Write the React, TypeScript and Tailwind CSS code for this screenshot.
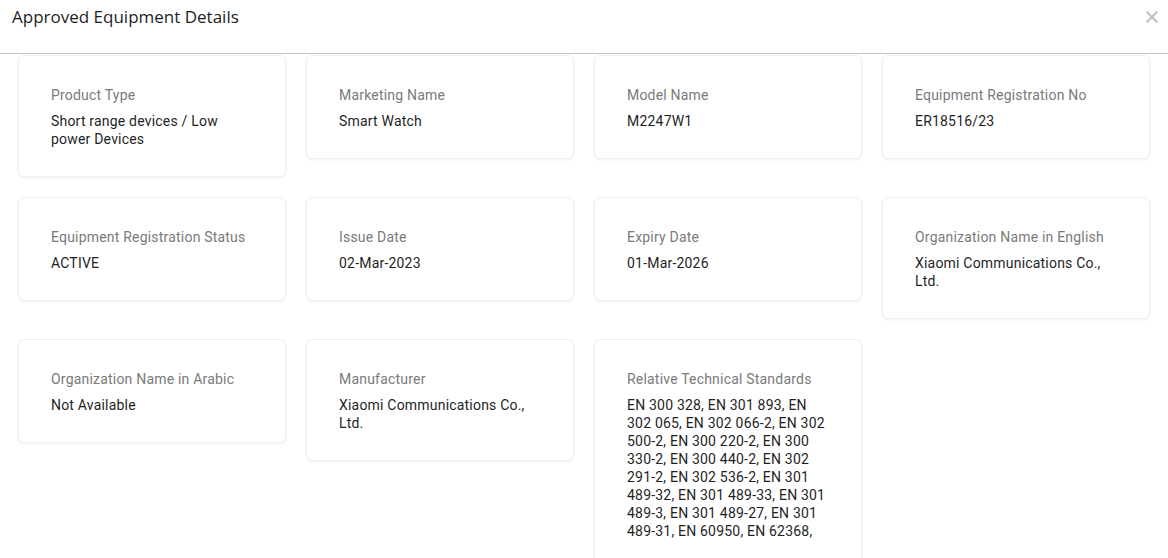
import React from "react";

type Field = { label: string; value: string };

const fields: Field[] = [
  { label: "Product Type", value: "Short range devices / Low power Devices" },
  { label: "Marketing Name", value: "Smart Watch" },
  { label: "Model Name", value: "M2247W1" },
  { label: "Equipment Registration No", value: "ER18516/23" },
  { label: "Equipment Registration Status", value: "ACTIVE" },
  { label: "Issue Date", value: "02-Mar-2023" },
  { label: "Expiry Date", value: "01-Mar-2026" },
  { label: "Organization Name in English", value: "Xiaomi Communications Co., Ltd." },
  { label: "Organization Name in Arabic", value: "Not Available" },
  { label: "Manufacturer", value: "Xiaomi Communications Co., Ltd." },
  {
    label: "Relative Technical Standards",
    value:
      "EN 300 328, EN 301 893, EN 302 065, EN 302 066-2, EN 302 500-2, EN 300 220-2, EN 300 330-2, EN 300 440-2, EN 302 291-2, EN 302 536-2, EN 301 489-32, EN 301 489-33, EN 301 489-3, EN 301 489-27, EN 301 489-31, EN 60950, EN 62368,",
  },
];

function DetailCard({ label, value }: Field) {
  return (
    <div className="bg-white border border-[#efefef] rounded-md shadow-[0_1px_3px_rgba(0,0,0,0.06)] pt-[30px] pb-[28px] pl-[32px] pr-[32px] tracking-[0.2px]">
      <div className="text-[14px] leading-[18px] text-[#7a7a7a] mb-[8px]">{label}</div>
      <div className="text-[14px] leading-[18px] text-[#1f1f1f]">{value}</div>
    </div>
  );
}

export default function App() {
  return (
    <div className="w-full h-[558px] overflow-hidden bg-white font-['Roboto',sans-serif]">
      {/* Header */}
      <div className="h-[54px] flex justify-between items-start border-b border-[#c4c4c4] pl-[12px] pr-[10px]">
        <h2 className="mt-[4px] text-[17px] leading-[26px] text-[#1e1e1e] font-['Open_Sans',sans-serif]">
          Approved Equipment Details
        </h2>
        <button className="mt-[11px] text-[#c4c4c4] focus:outline-none">
          <svg width="12" height="12" viewBox="0 0 12 12">
            <path d="M1.5 1.5 L10.5 10.5 M10.5 1.5 L1.5 10.5" stroke="currentColor" strokeWidth="2.4" strokeLinecap="square" />
          </svg>
        </button>
      </div>

      {/* Body */}
      <div className="grid grid-cols-4 gap-x-[20px] gap-y-[20px] items-start px-[18px] pt-px">
        {fields.map((f) => (
          <DetailCard key={f.label} label={f.label} value={f.value} />
        ))}
      </div>
    </div>
  );
}
